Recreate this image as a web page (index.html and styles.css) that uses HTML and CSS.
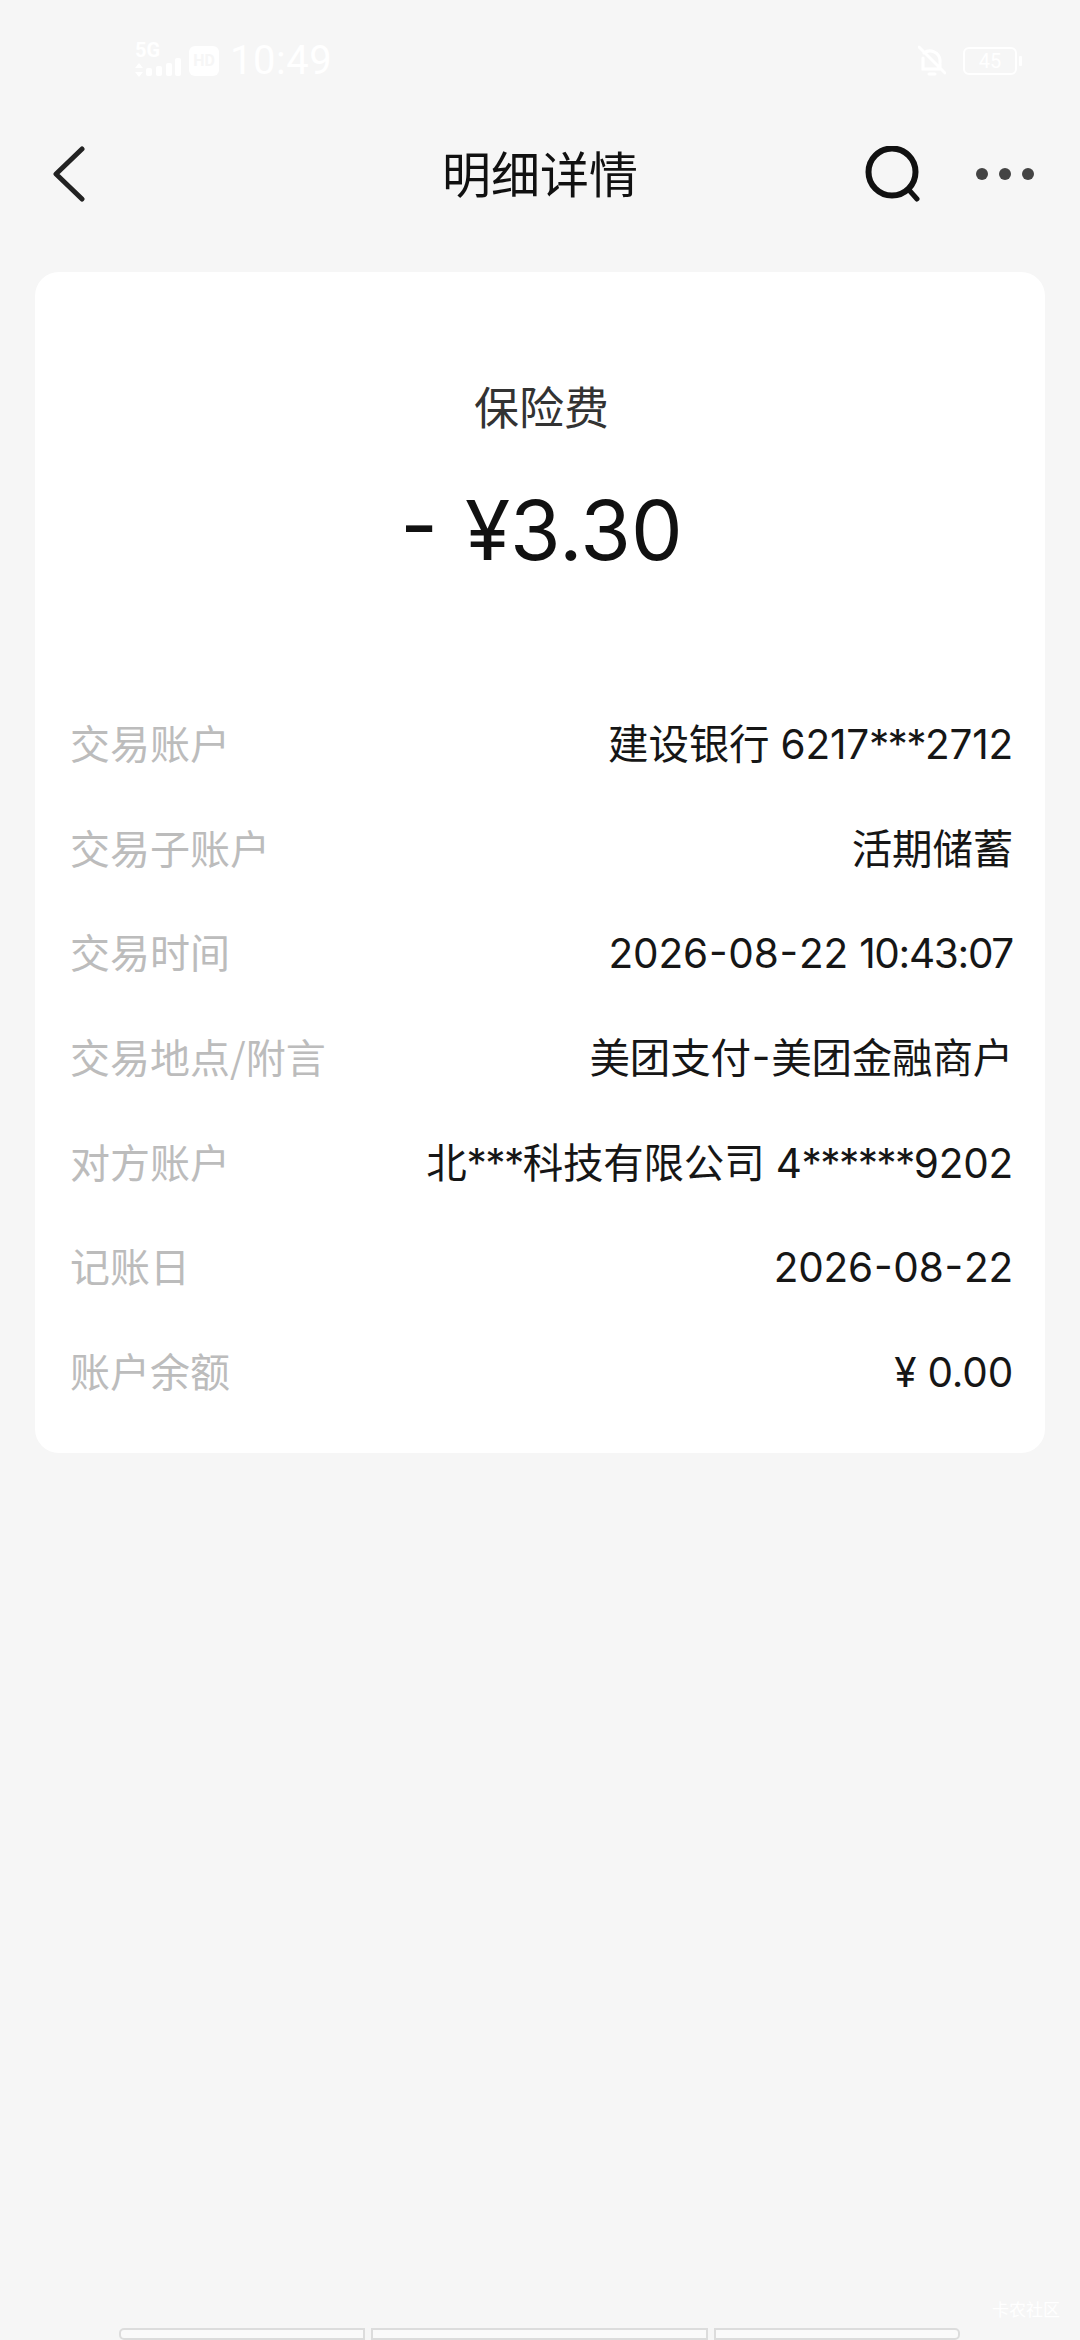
FILE: index.html
```html
<!DOCTYPE html>
<html lang="zh-CN">
<head>
<meta charset="utf-8">
<title>明细详情</title>
<link rel="stylesheet" href="styles.css">
</head>
<body>
<div class="page">
  <div class="status">
    <div class="status-left">
      <svg class="sig" width="48" height="34" viewBox="0 0 48 34" fill="#fff">
        <path d="M5 19l4 5H1zM5 33l4-5H1z"/><rect x="12" y="24" width="6" height="8" rx="2"/><rect x="22" y="22" width="6" height="10" rx="2"/><rect x="32" y="19" width="6" height="13" rx="2"/><rect x="41" y="14" width="6" height="18" rx="2"/>
      </svg>
      <span class="sg">5G</span>
      <span class="hd">HD</span>
      <span class="time">10:49</span>
    </div>
    <div class="status-right">
      <svg width="28" height="32" viewBox="0 0 28 32" fill="none" stroke="#fff" stroke-width="3" stroke-linecap="round">
        <path d="M6 8a10 10 0 0 1 16 7v9M5 13v11h15M1 2l26 26M11 29h6"/>
      </svg>
      <span class="battery"><span class="battery-num">45</span></span>
      <span class="battery-tip"></span>
    </div>
  </div>
  <header class="nav">
    <svg class="back" width="34" height="56" viewBox="0 0 34 56" fill="none" stroke="#222" stroke-width="5" stroke-linecap="round" stroke-linejoin="round"><path d="M30 3 4 28l26 25"/></svg>
    <h1 class="title">明细详情</h1>
    <div class="nav-actions">
      <svg width="56" height="56" viewBox="0 0 56 56" fill="none" stroke="#111" stroke-width="6" stroke-linecap="round"><circle cx="27" cy="26" r="23.5"/><path d="M44 44l8 9" stroke-width="5"/></svg>
      <div class="dots"><i></i><i></i><i></i></div>
    </div>
  </header>
  <main class="card">
    <div class="summary">
      <div class="kind">保险费</div>
      <div class="amount"><span class="minus">-</span> ¥3.30</div>
    </div>
    <dl class="rows">
      <div class="row"><dt>交易账户</dt><dd>建设银行 6217<span class="mask">***</span>2712</dd></div>
      <div class="row"><dt>交易子账户</dt><dd>活期储蓄</dd></div>
      <div class="row"><dt>交易时间</dt><dd>2026<span class="hy">-</span>08<span class="hy">-</span>22 <span class="clock">10:43:07</span></dd></div>
      <div class="row"><dt>交易地点/附言</dt><dd>美团支付<span class="hy">-</span>美团金融商户</dd></div>
      <div class="row"><dt>对方账户</dt><dd>北<span class="mask">***</span>科技有限公司 4<span class="mask">******</span>9202</dd></div>
      <div class="row"><dt>记账日</dt><dd>2026<span class="hy">-</span>08<span class="hy">-</span>22</dd></div>
      <div class="row"><dt>账户余额</dt><dd>¥ 0.00</dd></div>
    </dl>
  </main>
  <div class="spacer"></div>
  <div class="watermark">卡农社区</div>
  <div class="home"><i class="a"></i><i class="b"></i><i class="c"></i></div>
</div>
</body>
</html>
```
FILE: styles.css
```css
* { box-sizing: border-box; }
html, body { margin: 0; padding: 0; }
body { background: #f6f6f6; font-family: "Noto Sans CJK SC", "Roboto", sans-serif; }
.page { width: 1080px; height: 2340px; display: flex; flex-direction: column; overflow: hidden; background: #f6f6f6; }
.status { height: 104px; padding: 41px 58px 0 134px; display: flex; justify-content: space-between; align-items: flex-start; color: #fff; }
.status-left { display: flex; align-items: center; height: 40px; position: relative; }
.sg { position: absolute; left: 1px; top: 0; font: 700 20px/18px "Roboto", sans-serif; }
.hd { width: 30px; height: 30px; margin-left: 7px; border-radius: 6px; background: #fff; color: #f6f6f6; font: 700 16px/30px "Roboto", sans-serif; text-align: center; }
.time { margin-left: 11px; font: 400 40px/40px "Roboto", sans-serif; letter-spacing: 0.5px; }
.status-right { display: flex; align-items: center; height: 40px; }
.status-right svg { margin-right: 17px; }
.battery { width: 54px; height: 28px; border: 2px solid #fff; border-radius: 6px; display: flex; align-items: center; justify-content: center; }
.battery-num { font: 400 20px/24px "Roboto", sans-serif; }
.battery-tip { width: 3px; height: 10px; margin-left: 2px; background: #fff; border-radius: 1px; }
.nav { height: 140px; padding: 0 46px 0 52px; display: flex; align-items: center; position: relative; }
.back { flex: none; }
.title { position: absolute; left: 0; right: 0; top: 0; bottom: 0; margin: 0; padding-bottom: 5px; display: flex; align-items: center; justify-content: center; font: 400 49px/1 "Noto Sans CJK SC", sans-serif; color: #111; }
.nav-actions { margin-left: auto; display: flex; align-items: center; gap: 55px; position: relative; }
.dots { display: flex; gap: 11px; }
.dots i { width: 12px; height: 12px; border-radius: 50%; background: #444; }
.card { margin: 28px 35px 0; height: 1181px; background: #fff; border-radius: 24px; padding: 0 32px 0 35px; }
.summary { height: 419px; padding-top: 102px; text-align: center; }
.kind { font-size: 45px; line-height: 64px; color: #333; }
.amount { margin-top: 43px; font: 400 82px/100px "Inter", "Noto Sans CJK SC", sans-serif; color: #111; }
.minus { display: inline-block; margin-right: 4px; vertical-align: 6px; line-height: 1; }
.rows { margin: 0; display: flex; flex-direction: column; }
.row { height: 104.7px; display: flex; justify-content: space-between; align-items: center; }
.row dt { padding-bottom: 3px; font-size: 40px; line-height: 56px; color: #bcbcbc; }
.row dd { margin: 0; padding-top: 3px; font: 400 40.5px/56px "Inter", "Noto Sans CJK SC", sans-serif; letter-spacing: -0.2px; color: #161616; }
.mask { letter-spacing: -1.6px; }
.hy { margin: 0 1px; vertical-align: 2px; line-height: 1; }
.clock { letter-spacing: -1.3px; }
.spacer { flex: 1; }
.watermark { align-self: flex-end; margin: 0 20px 8px 0; font-size: 17px; line-height: 22px; color: #fff; }
.home { height: 12px; margin: 0 118px 0 119px; display: flex; gap: 6px; }
.home i { height: 12px; border: 2px solid #dcdcdc; background: #fafafa; }
.home .a { width: 246px; border-radius: 5px 0 0 5px; }
.home .b { width: 337px; }
.home .c { width: 246px; border-radius: 0 5px 5px 0; }
```
